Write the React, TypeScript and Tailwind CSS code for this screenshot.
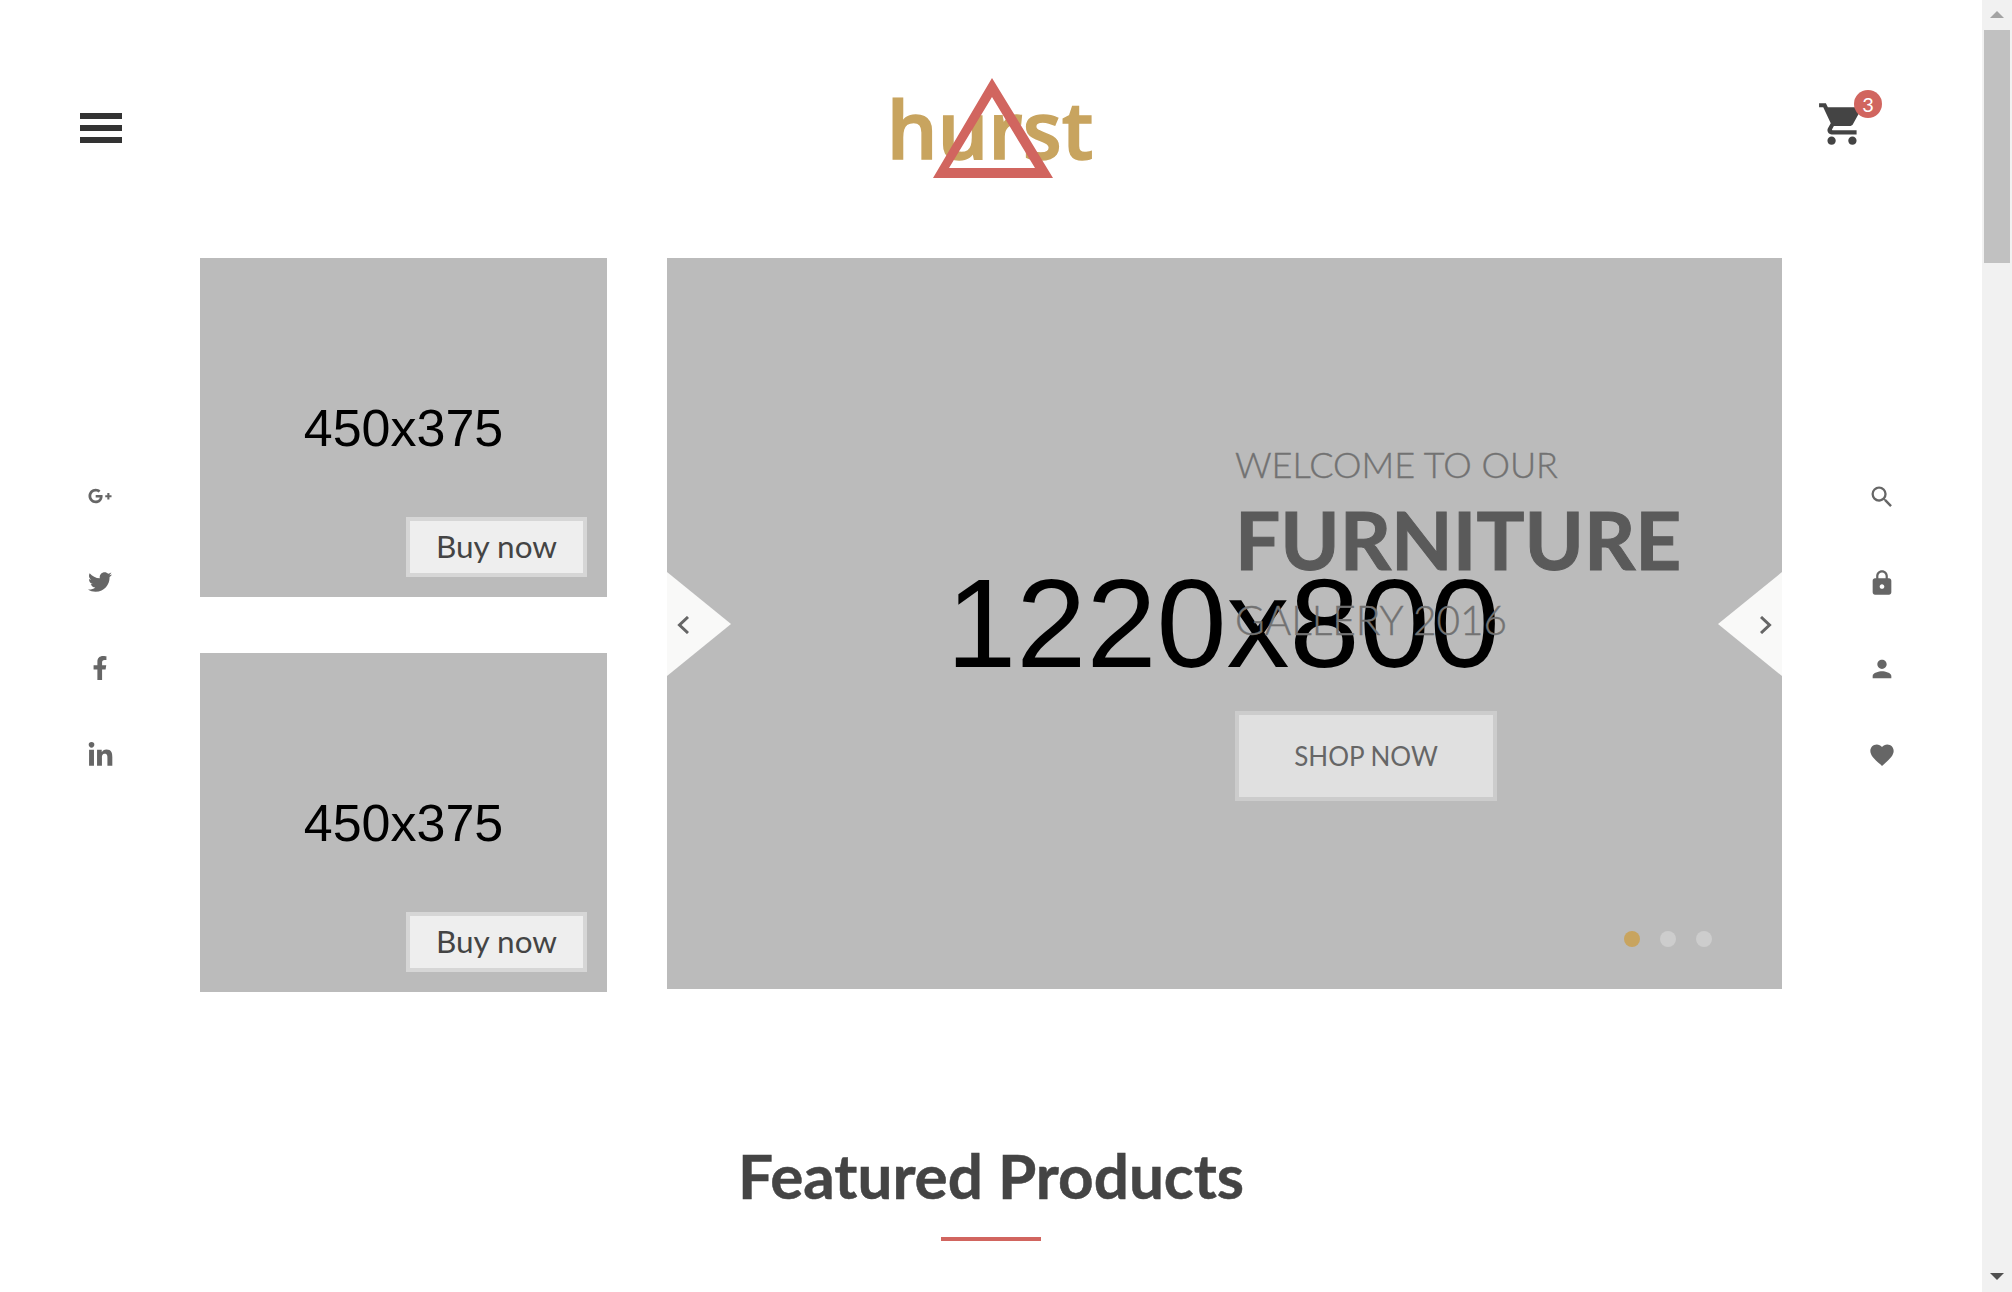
import { FaFacebookF, FaGooglePlusG, FaLinkedinIn, FaTwitter } from "react-icons/fa"
import { MdFavorite, MdLock, MdPerson, MdSearch, MdShoppingCart } from "react-icons/md"

const Placeholder = ({ label }: { label: string }) => (
  <div className="relative flex h-[339px] w-full items-center justify-center bg-[#bbbbbb] font-['Liberation_Sans',sans-serif] text-[52px] text-black">
    {label}
    <button className="absolute right-5 bottom-5 h-[60px] w-[181px] border-4 border-[#d6d6d6] bg-[#eeeeee] font-['Lato',sans-serif] text-[31.5px] text-[#444]">
      Buy now
    </button>
  </div>
)

const Logo = () => (
  <div className="relative flex h-[100px] w-[200px] items-end justify-center">
    <span className="font-['Open_Sans',sans-serif] text-[80px] leading-[100px] font-semibold text-[#c8a45f] blur-[0.6px] [-webkit-text-stroke:1.5px_#c8a45f]">hurst</span>
    <svg className="absolute top-0 left-[43px] h-[100px] w-[120px]" viewBox="0 0 120 100">
      <path fillRule="evenodd" fill="#d1655f" d="M59 0L120 100H0ZM59 19L16 90H102Z" />
    </svg>
  </div>
)

const App = () => {
  return (
    <div className="flex h-[1292px] overflow-hidden bg-white font-['Lato',sans-serif]">
      <main className="w-[1982px] shrink-0">
        <header className="grid grid-cols-[1fr_auto_1fr] items-center pt-[78px] pb-[80px] pl-20 pr-[82px]">
          <div className="flex flex-col gap-1.5">
            <span className="h-1.5 w-[42px] bg-[#333]"></span>
            <span className="h-1.5 w-[42px] bg-[#333]"></span>
            <span className="h-1.5 w-[42px] bg-[#333]"></span>
          </div>
          <Logo />
          <div className="mr-[33px] mb-2 flex justify-end">
            <div className="relative">
              <MdShoppingCart className="text-[#444]" size={50} />
              <span className="absolute -top-[9px] -right-[15px] flex h-7 w-7 items-center justify-center rounded-full bg-[#d1655f] text-xl text-white">
                3
              </span>
            </div>
          </div>
        </header>

        <section className="flex">
          <div className="flex h-[731px] w-[200px] flex-col items-center justify-center gap-[62px] pt-[5px] text-2xl text-[#666]">
            <FaGooglePlusG />
            <FaTwitter />
            <FaFacebookF />
            <FaLinkedinIn size={27} />
          </div>

          <div className="flex w-[407px] flex-col gap-14">
            <Placeholder label="450x375" />
            <Placeholder label="450x375" />
          </div>

          <div className="relative ml-[60px] flex h-[731px] w-[1115px] items-center justify-center bg-[#bbbbbb] pr-[3px]">
            <span className="font-['Liberation_Sans',sans-serif] text-[126px] text-black">1220x800</span>

            <div className="absolute top-[184px] left-[568px] flex flex-col items-start text-[#727272]">
              <p className="text-[36px] leading-[44px] font-light [-webkit-text-stroke:0.4px_#727272]">WELCOME TO OUR</p>
              <h2 className="mt-[9px] text-[80px] leading-[88px] font-bold text-[#5a5a5a] [-webkit-text-stroke:1px_#5a5a5a]">FURNITURE</h2>
              <p className="mt-[15px] text-[40.5px] leading-[44px] font-light [-webkit-text-stroke:0.4px_#727272]">GALLERY 2016</p>
              <button className="mt-[69px] h-[90px] w-[262px] border-4 border-[#cccccc] bg-[#e0e0e0] text-[26px] text-[#666]">
                SHOP NOW
              </button>
            </div>

            <div className="absolute top-[314px] left-0 flex h-[104px] w-16 items-center bg-[#f9f9f8] pl-2.5 [clip-path:polygon(0_0,100%_50%,0_100%)]">
              <svg className="mt-[2px] h-[18px] w-3" viewBox="0 0 12 18" fill="none" stroke="#666" strokeWidth="3">
                <polyline points="11,1 2.5,9 11,17" />
              </svg>
            </div>
            <div className="absolute top-[314px] right-0 flex h-[104px] w-16 items-center justify-end bg-[#f9f9f8] pr-2.5 [clip-path:polygon(100%_0,0_50%,100%_100%)]">
              <svg className="mt-[2px] h-[18px] w-3" viewBox="0 0 12 18" fill="none" stroke="#666" strokeWidth="3">
                <polyline points="1,1 9.5,9 1,17" />
              </svg>
            </div>

            <div className="absolute right-[70px] bottom-[42px] flex gap-5">
              <span className="h-4 w-4 rounded-full bg-[#c8a45f]"></span>
              <span className="h-4 w-4 rounded-full bg-[#cdcdcd]"></span>
              <span className="h-4 w-4 rounded-full bg-[#cdcdcd]"></span>
            </div>
          </div>

          <div className="flex h-[731px] w-[200px] flex-col items-center justify-center gap-[58px] pt-[5px] text-[28px] text-[#666]">
            <MdSearch />
            <MdLock />
            <MdPerson />
            <MdFavorite />
          </div>
        </section>

        <section className="mt-[147px] flex flex-col items-center">
          <h2 className="text-[62px] leading-[72px] font-bold text-[#444] [-webkit-text-stroke:0.5px_#444]">Featured Products</h2>
          <span className="mt-[26px] h-1 w-[100px] bg-[#d1655f]"></span>
        </section>
      </main>

      {/* browser scrollbar */}
      <aside className="flex w-[30px] shrink-0 flex-col items-center bg-[#f1f1f1]">
        <span className="mt-[11px] h-0 w-0 border-x-[7px] border-b-[7px] border-x-transparent border-b-[#a3a3a3]"></span>
        <span className="mt-3 h-[233px] w-[26px] bg-[#c1c1c1]"></span>
        <span className="mt-auto mb-3 h-0 w-0 border-x-[7px] border-t-[7px] border-x-transparent border-t-[#505050]"></span>
      </aside>
    </div>
  )
}

export default App
